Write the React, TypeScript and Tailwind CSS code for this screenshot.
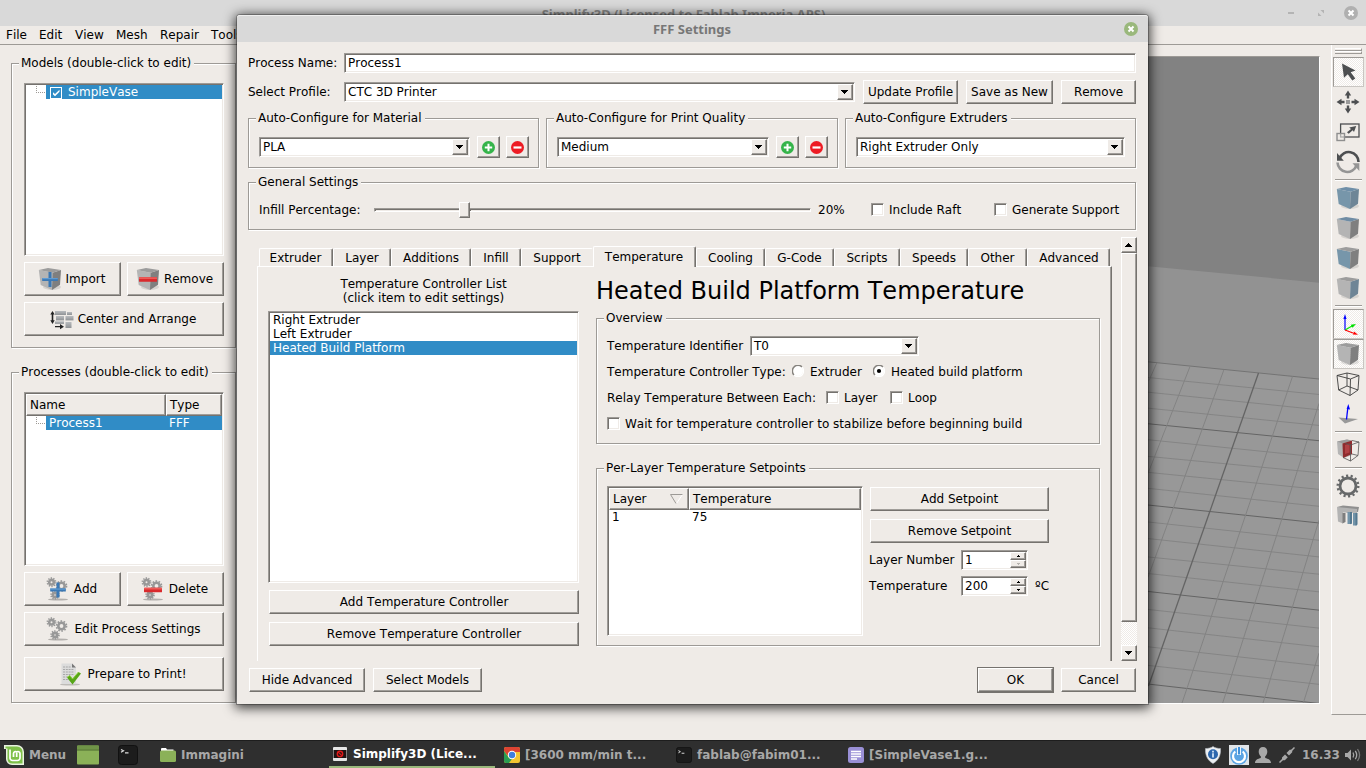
import type { ReactNode } from "react";

const SUNK =
  "border border-t-[#9d9a96] border-l-[#9d9a96] border-r-white border-b-white shadow-[inset_1px_1px_0_#75726e,inset_-1px_-1px_0_#efebe7] bg-white";
const RAISED =
  "border border-t-white border-l-white border-r-[#75726e] border-b-[#75726e] shadow-[inset_-1px_-1px_0_#a09d99] bg-[#efebe7]";

type Box = { className?: string; children?: ReactNode };

function Group({ title, className = "", children }: Box & { title: string }) {
  return (
    <section
      className={`relative shrink-0 border border-[#9d9a96] shadow-[1px_1px_0_#fff,inset_1px_1px_0_#fff] ${className}`}
    >
      <h2 className="absolute -top-2 left-[7px] bg-[#efebe7] px-[2px] pr-[3px]">{title}</h2>
      {children}
    </section>
  );
}

function Button({ className = "", children }: Box) {
  return (
    <button className={`flex shrink-0 items-center justify-center gap-1 ${RAISED} ${className}`}>
      {children}
    </button>
  );
}

function Triangle({ dir, small = false, dim = false }: { dir: "up" | "down"; small?: boolean; dim?: boolean }) {
  const fill = dim ? "#b5b2ae" : "#000";
  if (small) {
    return (
      <svg width="3" height="2" viewBox="0 0 3 2" shapeRendering="crispEdges">
        <path d={dir === "up" ? "M1 0h1v1h1v1H0V1h1z" : "M0 0h3v1H2v1H1V1H0z"} fill={fill} />
      </svg>
    );
  }
  return (
    <svg width="7" height="4" viewBox="0 0 7 4" shapeRendering="crispEdges" className="mr-px">
      <path
        d={dir === "up" ? "M3 0h1v1h1v1h1v1h1v1H0V3h1V2h1V1h1z" : "M0 0h7v1H6v1H5v1H4v1H3V3H2V2H1V1H0z"}
        fill={fill}
      />
    </svg>
  );
}

function Combo({ value, className = "" }: { value: string; className?: string }) {
  return (
    <div className={`flex h-5 shrink-0 items-center justify-between pr-px pl-[3px] ${SUNK} ${className}`}>
      <span>{value}</span>
      <span className={`flex h-4 w-4 items-center justify-center ${RAISED}`}>
        <Triangle dir="down" />
      </span>
    </div>
  );
}

function Spin({ value, atMin = false }: { value: string; atMin?: boolean }) {
  return (
    <div className={`flex h-5 w-[67px] shrink-0 items-center justify-between pr-px pl-[3px] ${SUNK}`}>
      <span>{value}</span>
      <span className="flex flex-col">
        <span className={`flex h-2 w-4 items-center justify-center ${RAISED}`}>
          <Triangle dir="up" small />
        </span>
        <span className={`flex h-2 w-4 items-center justify-center ${RAISED}`}>
          <Triangle dir="down" small dim={atMin} />
        </span>
      </span>
    </div>
  );
}

function Check({ label, className = "" }: { label: string; className?: string }) {
  return (
    <label className={`flex items-start gap-[5px] ${className}`}>
      <span className={`h-[13px] w-[13px] shrink-0 ${SUNK}`} />
      <span>{label}</span>
    </label>
  );
}

function Radio({ label, on = false, className = "" }: { label: string; on?: boolean; className?: string }) {
  return (
    <label className={`flex items-center gap-[6px] ${className}`}>
      <svg width="12" height="12" viewBox="0 0 12 12" className="relative -top-px shrink-0">
        <circle cx="6" cy="6" r="5" fill="#fff" />
        <path d="M2 10A5.500 5.500 0 0 1 10 2" fill="none" stroke="#85827e" strokeWidth="1.500" />
        <path d="M10 2A5.500 5.500 0 0 1 2 10" fill="none" stroke="#fff" strokeWidth="1.200" />
        {on && <circle cx="6" cy="6" r="2.100" fill="#000" />}
      </svg>
      <span>{label}</span>
    </label>
  );
}

/* ---------- icons ---------- */

const TOP = "0.8,3 10,1 23,3 14.5,5.8";
const LEFT = "0.8,3 14.5,5.8 14,23 2.7,18";
const RIGHT = "14.5,5.8 23,3 22,17.7 14,23";

function Cube({ top = "#9c9c9c", left = "#b4b4b4", right = "#7f7f7f", children }: { top?: string; left?: string; right?: string; children?: ReactNode }) {
  return (
    <svg width="24" height="24" viewBox="0 0 24 24" className="shrink-0">
      <ellipse cx="14" cy="20" rx="9" ry="3" fill="#000" opacity=".1" />
      <polygon points={LEFT} fill={left} />
      <polygon points={RIGHT} fill={right} />
      <polygon points={TOP} fill={top} />
      {children}
    </svg>
  );
}

const BluePlus = ({ x, y }: { x: number; y: number }) => (
  <g transform={`translate(${x} ${y})`}>
    <path d="M-1.500-7.500h3v6h6.300v3h-6.300v6h-3V1.500h-6.300v-3h6.300z" fill="#3b78b4" />
    <path d="M-7.800-1.500h15.600v1.200H-7.800z" fill="#5f9bd2" />
  </g>
);

const RedMinus = ({ x, y }: { x: number; y: number }) => (
  <g transform={`translate(${x} ${y})`}>
    <rect x="-9" y="-2.300" width="18" height="4.600" rx=".6" fill="#d92a2d" />
    <rect x="-9" y="-2.300" width="18" height="1.800" rx=".6" fill="#ee5a57" />
  </g>
);

function Cog({ x, y, r }: { x: number; y: number; r: number }) {
  const step = (2 * Math.PI * (r + 0.8)) / 20;
  return (
    <g>
      <circle cx={x} cy={y} r={r + 0.8} fill="none" stroke="#989898" strokeWidth="1.700" strokeDasharray={`${step} ${step}`} />
      <circle cx={x} cy={y} r={r - 1} fill="none" stroke="#989898" strokeWidth="2.600" />
    </g>
  );
}

function Gears({ children }: { children?: ReactNode }) {
  return (
    <svg width="24" height="24" viewBox="0 0 24 24" className="shrink-0">
      <ellipse cx="12" cy="22.500" rx="10" ry="1" fill="#000" opacity=".25" />
      <Cog x={5.5} y={5.2} r={3.3} />
      <Cog x={15.5} y={9} r={4.2} />
      <Cog x={9} y={18} r={3.1} />
      {children}
    </svg>
  );
}

const ArrangeIcon = () => (
  <svg width="24" height="24" viewBox="0 0 24 24" className="shrink-0">
    <defs>
      <linearGradient id="arr" x1="0" y1="0" x2="0" y2="1">
        <stop offset="0" stopColor="#b9bcbf" />
        <stop offset="1" stopColor="#8f9295" />
      </linearGradient>
    </defs>
    <g fill="url(#arr)">
      <rect x="5" y="4" width="11" height="4" />
      <rect x="17" y="5" width="5" height="3" />
      <rect x="6" y="9" width="8" height="4.400" />
      <rect x="15.500" y="9" width="8" height="4.400" />
      <rect x="5" y="14.300" width="9" height="2.600" />
      <rect x="15.500" y="15" width="6" height="6" />
    </g>
    <path d="M2.500 4l2.200 3.600H3.300v5.600h1.400L2.500 17 .3 13.200h1.400V7.600H.3z" fill="#222" />
    <path d="M5 19h5v-2l4 2.700-4 2.600v-2H5z" fill="#222" />
  </svg>
);

const PrepareIcon = () => (
  <svg width="24" height="24" viewBox="0 0 24 24" className="shrink-0">
    <ellipse cx="11" cy="22.500" rx="10" ry="1" fill="#000" opacity=".2" />
    <path d="M2.500 1.500H13l4 4V22H2.500z" fill="#dcdcdc" />
    <path d="M13 1.500l4 4h-4z" fill="#777" />
    <path d="M4 5h8M4 7.500h11M4 10h11M4 12.500h11M4 15h7M4 17.500h6" stroke="#a8a8a8" strokeDasharray="2 .8" />
    <path d="M8 15.500l2.800-2 2.700 3.500 6-7 2.500 1.500L13.500 22.500z" fill="#58a618" />
    <path d="M8 15.500l2.800-2 2.700 3.500 6-7" fill="none" stroke="#8ccf3f" />
  </svg>
);

const PlusDot = () => (
  <svg width="13" height="13" viewBox="0 0 13 13" className="mr-px">
    <circle cx="6.500" cy="6.500" r="6.500" fill="#35b44a" />
    <path d="M6.500 2.800v7.400M2.800 6.500h7.400" stroke="#fff" strokeWidth="2" />
  </svg>
);

const MinusDot = () => (
  <svg width="13" height="13" viewBox="0 0 13 13" className="mr-px">
    <circle cx="6.500" cy="6.500" r="6.500" fill="#ed1c24" />
    <path d="M2.500 6.500h8" stroke="#fff" strokeWidth="2.200" />
  </svg>
);

const PointerIcon = () => (
  <svg width="24" height="24" viewBox="0 0 24 24">
    <path d="M6 3.500l13.500 7-4.800 1.700 4.600 6.200-3 2.200-4.500-6.400-3.800 3.600z" fill="#4d4f51" />
  </svg>
);

const MoveIcon = () => (
  <svg width="24" height="24" viewBox="0 0 24 24">
    <rect x="10" y="10" width="4" height="4" fill="#9a9a9a" />
    <path d="M12 .5L15.200 5.500h-2v3h-2.400v-3h-2zM12 23.500L15.200 18.500h-2v-3h-2.400v3h-2zM.5 12L5.500 8.800v2h3v2.400h-3v2zM23.500 12L18.500 8.800v2h-3v2.400h3v2z" fill="#4d4f51" />
  </svg>
);

const ScaleIcon = () => (
  <svg width="24" height="24" viewBox="0 0 24 24">
    <rect x="4.600" y="4" width="18.400" height="13" fill="none" stroke="#4d4f51" strokeWidth="1.300" />
    <rect x="1" y="13.500" width="7.500" height="7" fill="#efebe7" fillOpacity=".6" stroke="#8f8f8f" strokeWidth="1.400" />
    <path d="M11 12.200l4-3.300-1.800-1.500 7-1.400-2.200 6-1.300-1.700-4 3.400z" fill="#4d4f51" />
  </svg>
);

const RotateIcon = () => (
  <svg width="24" height="24" viewBox="0 0 24 24">
    <path d="M3.500 8.500A9.800 9.800 0 0 1 22.500 12" fill="none" stroke="#4d4f51" strokeWidth="2.600" />
    <path d="M1 3v7.800h6.800z" fill="#4d4f51" />
    <path d="M20.500 15.500A9.800 9.800 0 0 1 1.500 12.500" fill="none" stroke="#959595" strokeWidth="2.600" />
    <path d="M23.300 21v-7.800h-6.800z" fill="#959595" />
  </svg>
);

const AxesIcon = () => (
  <svg width="24" height="24" viewBox="0 0 24 24">
    <path d="M9 18V5" stroke="#00f" strokeWidth="1.200" />
    <path d="M9 2l1.600 5H7.400z" fill="#00f" />
    <path d="M9 18l7-4" stroke="#0e0" strokeWidth="1.200" />
    <path d="M20 12l-5.300.8 1.800 2.900z" fill="#0d0" />
    <path d="M9 18l8 3" stroke="red" strokeWidth="1.200" />
    <path d="M22 22.800l-5.200-.2 1.200-3z" fill="red" />
  </svg>
);

const WireIcon = () => (
  <svg width="24" height="24" viewBox="0 0 24 24">
    <path d="M1 3.500L11 1l12 2.500L14.500 7zM1 3.500L2.700 18 14 23.500 14.500 7M14 23.500L22 18 23 3.500M11 1v13L2.700 18M11 14l11 4" fill="none" stroke="#3c3c3c" strokeWidth=".9" />
  </svg>
);

const NormalIcon = () => (
  <svg width="24" height="24" viewBox="0 0 24 24">
    <path d="M2.500 15.500l6.500 6 13-4.500z" fill="#999" />
    <path d="M10.500 17.500L11.800 6" stroke="#00f" strokeWidth="1.300" />
    <path d="M12.300 2l1.700 5.500-3.400-.4z" fill="#00f" />
  </svg>
);

const SectionIcon = () => (
  <svg width="24" height="24" viewBox="0 0 24 24">
    <path d="M1 3.500L11 1.500 16 3v14l-8 3-6-4z" fill="#b5b5b5" />
    <path d="M1 3.500L11 1.500l5 1-9 3z" fill="#9c9c9c" />
    <path d="M6.500 5.500L16 2.500v13.500l-9 4z" fill="#8f2b2e" />
    <path d="M9 7l4.500-1.500v9L9 16z" fill="#b04145" />
    <path d="M16 2.500L23 4l-8.500 3-5-1.500M14.500 7v16L22 17.500 23 4M7 19.500l7.500 3.500M16 16l6 1.500" fill="none" stroke="#555" strokeWidth=".8" />
  </svg>
);

const GearIcon = () => (
  <svg width="24" height="24" viewBox="0 0 24 24">
    <circle cx="12" cy="12" r="8" fill="none" stroke="#666869" strokeWidth="2.800" />
    <circle cx="12" cy="12" r="10.300" fill="none" stroke="#666869" strokeWidth="2.400" strokeDasharray="2.160 2.463" />
  </svg>
);

const SupportIcon = () => (
  <svg width="24" height="24" viewBox="0 0 24 24">
    <path d="M1 3l6-1.500L23 3l-1 5-11 .5z" fill="#8f8f8f" />
    <path d="M1 3l20 2v4l-14-.5v11L2 17.500z" fill="#b3b3b3" />
    <path d="M6.500 9h3v9l-3 1.500z" fill="#7e7e7e" />
    <path d="M11.500 8h4v12h-4zM17 9h4v12.500h-4z" fill="#7394a9" />
    <path d="M14 8h2v11.500l-2 .7zM19.500 9h2v11.500l-2 1z" fill="#54788f" />
  </svg>
);

/* ---------- main window ---------- */

function TreeBranch() {
  return (
    <svg width="20" height="14" viewBox="0 0 20 14" shapeRendering="crispEdges" className="shrink-0">
      <path d="M10.500 1v7M12 7.500h8" stroke="#9d9a96" strokeDasharray="1 1" fill="none" />
    </svg>
  );
}

function Sidebar() {
  return (
    <aside className="flex w-60 shrink-0 flex-col pt-[18px] pl-[11px]">
      <Group title="Models (double-click to edit)" className="h-[285px] w-[225px] pt-[19px] pl-3">
        <div className={`h-[173px] w-[200px] p-px ${SUNK}`}>
          <div className="flex h-[14px]">
            <TreeBranch />
            <div className="flex flex-1 items-center bg-[#308cc6] pl-1 text-white">
              <svg width="12" height="12" viewBox="0 0 12 12" className="mt-px">
                <rect x=".5" y=".5" width="11" height="11" fill="none" stroke="#fff" />
                <path d="M3 5.200v2.300L5 9.300l4.500-4.500V2.700L5 7z" fill="#fff" />
              </svg>
              <span className="pl-[6px]">SimpleVase</span>
            </div>
          </div>
        </div>
        <div className="mt-[6px] flex gap-[6px]">
          <Button className="h-[34px] w-[97px] pr-[2px]">
            <Cube><BluePlus x={12} y={12.5} /></Cube>
            Import
          </Button>
          <Button className="h-[34px] w-[97px] pr-[2px]">
            <Cube><RedMinus x={12} y={12.5} /></Cube>
            Remove
          </Button>
        </div>
        <Button className="mt-[6px] h-[34px] w-[200px] pr-[2px]">
          <ArrangeIcon />
          Center and Arrange
        </Button>
      </Group>

      <Group title="Processes (double-click to edit)" className="mt-6 h-[331px] w-[225px] pt-[19px] pl-3">
        <div className={`h-[174px] w-[200px] p-px ${SUNK}`}>
          <div className="flex h-[22px]">
            <span className={`flex w-[140px] items-center pl-[3px] ${RAISED}`}>Name</span>
            <span className={`flex flex-1 items-center pl-[3px] ${RAISED}`}>Type</span>
          </div>
          <div className="flex h-[14px]">
            <TreeBranch />
            <div className="flex flex-1 bg-[#308cc6] pl-[3px] text-white">
              <span className="w-[120px]">Process1</span>
              <span>FFF</span>
            </div>
          </div>
        </div>
        <div className="mt-[6px] flex gap-[6px]">
          <Button className="h-[34px] w-[97px] pr-[2px]">
            <Gears><BluePlus x={12} y={13} /></Gears>
            Add
          </Button>
          <Button className="h-[34px] w-[97px] pr-[2px]">
            <Gears><RedMinus x={12} y={13} /></Gears>
            Delete
          </Button>
        </div>
        <Button className="mt-[6px] h-[34px] w-[200px] pr-px">
          <Gears />
          Edit Process Settings
        </Button>
        <Button className="mt-[11px] h-[34px] w-[200px] pr-[2px]">
          <PrepareIcon />
          Prepare to Print!
        </Button>
      </Group>
    </aside>
  );
}

/* [y at left edge, y at right edge] of the bed's cross lines; every fifth one is heavy */
const ROWS: [number, number][] = [
  [377, 394], [391.7, 409.3], [407.7, 425], [423.3, 440.3], [439.3, 456.7], [456, 472.3],
  [472, 489], [488, 506], [504.7, 522.7], [521.7, 540], [538.3, 556.7], [556.7, 574],
  [573.3, 591.7], [591.3, 610], [609.3, 628], [627.7, 646.7], [646.7, 665.7], [665.3, 684.3], [684, 703.5],
];
const COLS: [number, number, number, number][] = [
  [1156.7, 362.5, 1149, 380], [1190, 366, 1148, 473], [1224, 369, 1148, 577],
  [1292.5, 376, 1182, 703], [1319, 403, 1222.7, 703], [1319, 520, 1263, 703], [1319, 653, 1303.3, 703],
];

function Viewport() {
  return (
    <svg viewBox="240 56 1079 647" width="1080" height="648" preserveAspectRatio="none" className="mt-[11px] shrink-0 border-t border-r border-b border-t-[#9d9a96] border-r-white border-b-white">
      <rect x="240" y="56" width="1079" height="647" fill="#828282" />
      <path d="M240 178L1148 265.500 1319 282V703H240z" fill="#929292" />
      <path d="M1148 361.300L1319 378.500V703H1148z" fill="#989898" />
      <path d="M1148 361.300L1319 378.500" stroke="#737373" />
      {ROWS.map(([a, b], i) => (
        <path key={i} d={`M1148 ${a}L1319 ${b}`} stroke={(i === 3 || i === 8 || i === 13 || i === 18) ? "#646464" : "#858585"} />
      ))}
      {COLS.map(([a, b, c, d], i) => (
        <path key={i} d={`M${a} ${b}L${c} ${d}`} stroke="#838383" />
      ))}
      <path d="M1258.500 372.500L1148.500 686" stroke="#646464" strokeWidth="1.300" />
    </svg>
  );
}

function Tool({ on = false, children }: { on?: boolean; children: ReactNode }) {
  return (
    <div
      className={
        on
          ? "flex h-[30px] w-[31px] items-center justify-center border border-t-[#9d9a96] border-l-[#9d9a96] border-r-[#c9c6c2] border-b-[#c9c6c2] bg-[conic-gradient(#fff_25%,#efebe7_0_50%,#fff_0_75%,#efebe7_0)] bg-size-[2px_2px] pr-px"
          : "flex h-[30px] w-[31px] items-center justify-center pr-[2px]"
      }
    >
      {children}
    </div>
  );
}

const ToolBreak = () => (
  <div className="flex h-[6px] items-center pl-[2px]">
    <div className="h-[2px] w-[27px] border-t border-b border-t-[#9d9a96] border-b-white" />
  </div>
);

function Toolbar() {
  const gray = "#b4b4b4";
  return (
    <nav className="flex h-[670px] w-[35px] shrink-0 flex-col border-b border-l border-b-[#9d9a96] border-l-white pl-px">
      <div className="mt-[3px] mb-[3px] ml-[2px] flex h-[6px] w-[27px] flex-col">
        <div className="h-[3px] border-t border-r border-b border-t-white border-r-[#9d9a96] border-b-[#9d9a96]" />
        <div className="h-[3px] border-t border-r border-b border-t-white border-r-[#9d9a96] border-b-[#9d9a96]" />
      </div>
      <Tool on><PointerIcon /></Tool>
      <Tool><MoveIcon /></Tool>
      <Tool><ScaleIcon /></Tool>
      <Tool><RotateIcon /></Tool>
      <ToolBreak />
      <Tool><Cube top="#6f8fa8" left="#7796aa" right="#6e8596" /></Tool>
      <Tool><Cube top="#6f8ca4" left={gray} /></Tool>
      <Tool><Cube left="#7796aa" /></Tool>
      <Tool><Cube left={gray} right="#6e8596" /></Tool>
      <ToolBreak />
      <Tool on><AxesIcon /></Tool>
      <Tool on><Cube left={gray} /></Tool>
      <Tool><WireIcon /></Tool>
      <Tool><NormalIcon /></Tool>
      <ToolBreak />
      <Tool><SectionIcon /></Tool>
      <ToolBreak />
      <Tool><GearIcon /></Tool>
      <Tool><SupportIcon /></Tool>
    </nav>
  );
}

const MENUS: [string, string][] = [
  ["File", "w-[33px]"], ["Edit", "w-[36px]"], ["View", "w-[41px]"], ["Mesh", "w-[44px]"],
  ["Repair", "w-[51px]"], ["Tools", "w-[46px]"], ["Help", "w-[40px]"],
];

function MainWindow() {
  return (
    <main className="flex h-[740px] flex-col">
      <header className="flex h-[26px] items-center bg-[#d9d9d9]">
        <h1 className="w-full pt-px pl-[85px] text-center font-['Noto_Sans'] text-[13px] leading-[18px] font-bold text-[#8b8b8b] [font-kerning:normal]">
          Simplify3D (Licensed to Fablab Imperia APS)
        </h1>
        <div className="flex w-[84px] shrink-0 items-center justify-between pr-2 pl-[6px]">
          <span className="h-[2px] w-[6px] bg-[#b4b4b4]" />
          <svg width="6" height="6" viewBox="0 0 6 6" className="ml-1">
            <path d="M2.500 0H6v3.500zM0 2.500L3.500 6H0z" fill="#b4b4b4" />
          </svg>
          <svg width="14" height="14" viewBox="0 0 14 14">
            <circle cx="7" cy="7" r="7" fill="#b0b0b0" />
            <path d="M4.500 4.500l5 5M9.500 4.500l-5 5" stroke="#fff" strokeWidth="2" />
          </svg>
        </div>
      </header>
      <nav className="flex h-[19px] items-center border-b border-[#9d9a96] pl-[6px]">
        {MENUS.map(([name, width]) => (
          <span key={name} className={width}>{name}</span>
        ))}
      </nav>
      <div className="flex flex-1">
        <Sidebar />
        <Viewport />
        <div className="w-[11px] shrink-0" />
        <Toolbar />
      </div>
    </main>
  );
}

/* ---------- settings dialog ---------- */

const TABS: [string, string][] = [
  ["Extruder", "w-[74px] pr-px"], ["Layer", "w-[58px]"], ["Additions", "w-[80px]"], ["Infill", "w-[50px]"],
  ["Support", "w-[72px]"], ["Temperature", "w-[103px] pr-px"], ["Cooling", "w-[69px]"], ["G-Code", "w-[69px]"],
  ["Scripts", "w-[66px]"], ["Speeds", "w-[68px]"], ["Other", "w-[59px]"], ["Advanced", "w-[83px] pl-px"],
];

function Tabs() {
  return (
    <div className="mt-[9px] flex h-5 shrink-0 items-end pl-[2px]">
      {TABS.map(([name, width]) => (
        <div
          key={name}
          className={`${width} flex shrink-0 justify-center rounded-t-[2px] ${RAISED} border-b-0 ${
            name === "Temperature"
              ? "relative -mb-px h-[21px] pt-[3px] shadow-[inset_-1px_0_0_#a09d99]"
              : name === "Support"
                ? "h-[18px] border-r-[#efebe7] pt-[2px] shadow-none"
                : "h-[18px] pt-[2px] shadow-[inset_-1px_0_0_#a09d99]"
          }`}
        >
          {name}
        </div>
      ))}
    </div>
  );
}

function Controllers() {
  return (
    <div className="flex w-[311px] shrink-0 flex-col">
      <p className="text-center">
        Temperature Controller List
        <br />
        (click item to edit settings)
      </p>
      <ul className={`mt-[6px] h-[272px] shrink-0 p-px ${SUNK}`}>
        <li className="h-[14px] pl-[3px]">Right Extruder</li>
        <li className="h-[14px] pl-[3px]">Left Extruder</li>
        <li className="h-[14px] bg-[#308cc6] pl-[3px] text-white">Heated Build Platform</li>
      </ul>
      <Button className="mt-[7px] ml-px h-6">Add Temperature Controller</Button>
      <Button className="mt-2 ml-px h-6">Remove Temperature Controller</Button>
    </div>
  );
}

function PlatformSettings() {
  return (
    <div className="flex w-[504px] shrink-0 flex-col">
      <h1 className="text-[24px] leading-7 whitespace-nowrap">Heated Build Platform Temperature</h1>
      <Group title="Overview" className="mt-[13px] flex h-[126px] flex-col gap-[6px] pt-[17px] pl-[10px]">
        <div className="flex h-5 items-center">
          <span className="w-[143px]">Temperature Identifier</span>
          <Combo value="T0" className="w-[169px]" />
        </div>
        <div className="flex h-5 items-center">
          <span className="w-[185px] whitespace-nowrap">Temperature Controller Type:</span>
          <Radio label="Extruder" className="w-[81px]" />
          <Radio label="Heated build platform" on />
        </div>
        <div className="flex h-5 items-center">
          <span className="w-[219px] whitespace-nowrap">Relay Temperature Between Each:</span>
          <Check label="Layer" className="w-[64px]" />
          <Check label="Loop" />
        </div>
        <div className="flex h-5 items-center">
          <Check label="Wait for temperature controller to stabilize before beginning build" />
        </div>
      </Group>
      <Group title="Per-Layer Temperature Setpoints" className="mt-6 flex h-[178px] pt-[17px] pl-[10px]">
        <div className={`h-[150px] w-[256px] shrink-0 p-px ${SUNK}`}>
          <div className="flex h-[22px]">
            <span className={`flex w-20 items-center justify-between pr-[5px] pl-[3px] ${RAISED}`}>
              Layer
              <svg width="13" height="10" viewBox="0 0 13 10">
                <path d="M12.500.5L6.500 9.500" stroke="#fff" />
                <path d="M12.500.5H.5l5.500 9" fill="none" stroke="#9d9a96" />
              </svg>
            </span>
            <span className={`flex flex-1 items-center pl-[3px] ${RAISED}`}>Temperature</span>
          </div>
          <div className="flex h-[14px] pl-[3px]">
            <span className="w-20">1</span>
            <span>75</span>
          </div>
        </div>
        <div className="flex flex-col pt-px pl-[6px]">
          <Button className="ml-px h-6 w-[179px]">Add Setpoint</Button>
          <Button className="mt-2 ml-px h-6 w-[179px]">Remove Setpoint</Button>
          <div className="mt-[7px] flex h-5 items-center">
            <span className="w-[92px]">Layer Number</span>
            <Spin value="1" atMin />
          </div>
          <div className="mt-[6px] flex h-5 items-center">
            <span className="w-[92px]">Temperature</span>
            <Spin value="200" />
            <span className="pl-[7px]">ºC</span>
          </div>
        </div>
      </Group>
    </div>
  );
}

function Scrollbar() {
  return (
    <div className="flex w-4 shrink-0 flex-col bg-[conic-gradient(#fff_25%,#efebe7_0_50%,#fff_0_75%,#efebe7_0)] bg-size-[2px_2px]">
      <span className={`flex h-4 items-center justify-center ${RAISED}`}><Triangle dir="up" /></span>
      <span className={`h-[369px] ${RAISED}`} />
      <span className={`mt-auto flex h-4 items-center justify-center ${RAISED}`}><Triangle dir="down" /></span>
    </div>
  );
}

function Dialog() {
  return (
    <div
      role="dialog"
      className="absolute top-[15px] left-[237px] flex h-[689px] w-[911px] flex-col rounded-t-[3px] bg-[#efebe7] shadow-[0_0_0_1px_rgba(0,0,0,.25),0_2px_12px_2px_rgba(0,0,0,.75)]"
    >
      <header className="flex h-[27px] shrink-0 items-center rounded-t-[3px] border-t border-[#efefef] bg-[#d9d9d9] pr-[10px] pl-[23px]">
        <h1 className="flex-1 text-center font-['Noto_Sans'] text-[13px] leading-[18px] font-bold text-[#777] [font-kerning:normal]">FFF Settings</h1>
        <svg width="14" height="14" viewBox="0 0 14 14" className="-mt-px">
          <circle cx="7" cy="7" r="7" fill="#9ab87c" />
          <path d="M4.500 4.500l5 5M9.500 4.500l-5 5" stroke="#fff" strokeWidth="2" />
        </svg>
      </header>
      <div className="flex flex-1 flex-col pt-[11px] pr-3 pl-[11px]">
        <div className="flex h-5 items-center">
          <span className="w-24">Process Name:</span>
          <div className={`flex h-5 flex-1 items-center pl-[3px] ${SUNK}`}>Process1</div>
        </div>
        <div className="mt-[7px] flex h-6 items-center">
          <span className="w-24">Select Profile:</span>
          <Combo value="CTC 3D Printer" className="w-[511px]" />
          <Button className="ml-2 h-6 w-[95px]">Update Profile</Button>
          <Button className="ml-2 h-6 w-[87px]">Save as New</Button>
          <Button className="ml-2 h-6 w-[75px]">Remove</Button>
        </div>
        <div className="mt-[14px] flex gap-[7px]">
          <Group title="Auto-Configure for Material" className="flex h-[50px] w-[291px] items-start pt-[17px] pl-[10px]">
            <Combo value="PLA" className="mt-px w-[211px]" />
            <Button className="ml-[7px] h-[22px] w-[23px]"><PlusDot /></Button>
            <Button className="ml-[6px] h-[22px] w-[23px]"><MinusDot /></Button>
          </Group>
          <Group title="Auto-Configure for Print Quality" className="flex h-[50px] w-[292px] items-start pt-[17px] pl-[10px]">
            <Combo value="Medium" className="mt-px w-[212px]" />
            <Button className="ml-[7px] h-[22px] w-[23px]"><PlusDot /></Button>
            <Button className="ml-[6px] h-[22px] w-[23px]"><MinusDot /></Button>
          </Group>
          <Group title="Auto-Configure Extruders" className="flex h-[50px] w-[291px] items-start pt-[17px] pl-[10px]">
            <Combo value="Right Extruder Only" className="mt-px w-[269px]" />
          </Group>
        </div>
        <Group title="General Settings" className="mt-[14px] flex h-12 items-start pt-[19px] pl-[10px]">
          <div className="flex h-4 items-center">
            <span className="w-[115px]">Infill Percentage:</span>
            <div className="flex h-4 w-[437px] items-center">
              <span className={`h-1 w-[85px] ${SUNK} border-r-0`} />
              <span className={`h-4 w-[11px] ${RAISED}`} />
              <span className={`h-1 flex-1 ${SUNK} border-l-0`} />
            </div>
            <span className="w-[60px] pl-[7px]">20%</span>
            <Check label="Include Raft" className="w-[123px]" />
            <Check label="Generate Support" />
          </div>
        </Group>
        <div className="mt-[7px] -mr-px flex h-[424px] shrink-0 justify-between pl-[9px]">
          <div className="flex w-[855px] flex-col">
            <Tabs />
            <div className="flex flex-1 gap-[17px] border-t border-r border-l border-t-white border-r-[#75726e] border-l-white pt-[10px] pl-[10px] shadow-[inset_-1px_0_0_#a09d99]">
              <Controllers />
              <PlatformSettings />
            </div>
          </div>
          <Scrollbar />
        </div>
        <div className="mt-[6px] flex h-[26px] items-center pl-px">
          <Button className="h-6 w-[116px]">Hide Advanced</Button>
          <Button className="ml-2 h-6 w-[109px]">Select Models</Button>
          <div className="ml-auto border border-[#75726e]">
            <Button className="h-6 w-[75px]">OK</Button>
          </div>
          <Button className="ml-[7px] h-6 w-[75px]">Cancel</Button>
        </div>
      </div>
    </div>
  );
}

/* ---------- taskbar ---------- */

const TermIcon = ({ size }: { size: number }) => (
  <svg width={size} height={size} viewBox="0 0 20 20" className="shrink-0">
    <rect x=".5" y=".5" width="19" height="19" rx="3" fill="#1c1c1c" stroke="#111" />
    <path d="M3 4.500l2.500 1.300L3 7.300M7 7.800h3.500" stroke="#ddd" strokeWidth="1.200" fill="none" />
  </svg>
);

function Taskbar() {
  return (
    <footer className="flex h-7 items-center border-t border-[#1d1d1d] bg-[#2f2f2f] text-[12px] font-bold text-[#a8a8a8] [font-kerning:normal]">
      <div className="flex w-[73px] items-center gap-[5px] pl-1">
        <svg width="20" height="20" viewBox="0 0 20 20" className="shrink-0">
          <path d="M0 0h13a7 7 0 0 1 7 7v13H8a6 6 0 0 1-6-6V4H0z" fill="#e9f3df" />
          <path d="M1.500 1.500H13a5.500 5.500 0 0 1 5.500 5.500v11.500H8.500A5 5 0 0 1 3.500 14V3.500h-2z" fill="#7fc04a" />
          <path d="M6 4.500V13a2.500 2.500 0 0 0 2.500 2.500h5A2.500 2.500 0 0 0 16 13V8.500a2 2 0 0 0-3.300-1.500A2 2 0 0 0 9.500 8.500V12M12.700 8v4" fill="none" stroke="#fff" strokeWidth="1.700" />
        </svg>
        <span>Menu</span>
      </div>
      <svg width="22" height="20" viewBox="0 0 22 20" className="ml-1 shrink-0">
        <rect width="22" height="19" y=".5" rx="1" fill="#8bb158" />
        <path d="M0 1.500Q0 .5 1 .5h20q1 0 1 1v3H0z" fill="#6f9447" />
        <path d="M0 5h22" stroke="#4c6a2e" />
      </svg>
      <div className="ml-[19px] flex w-[42px]"><TermIcon size={20} /></div>
      <div className="flex w-[169px] items-center gap-[5px]">
        <svg width="16" height="14" viewBox="0 0 16 14" className="shrink-0">
          <path d="M1 1Q1 0 2 0h4l1 1.500h6.500V4H1z" fill="#fff" />
          <rect y="2.500" width="16" height="11.500" rx="1.500" fill="#8bb158" />
        </svg>
        <span>Immagini</span>
      </div>
      <div className="flex h-[27px] w-[166px] items-center gap-[6px] border-b-2 border-[#9ab87c] pl-1 text-white">
        <svg width="14" height="14" viewBox="0 0 14 14" className="shrink-0">
          <rect width="14" height="14" rx="1" fill="#e4e4e4" />
          <rect x=".5" y="3" width="13" height="8" fill="#1e1212" />
          <circle cx="7" cy="6.900" r="2.700" fill="none" stroke="#e01818" strokeWidth="1.400" />
          <path d="M5.200 5.100l3.600 3.600" stroke="#e01818" strokeWidth="1.200" />
        </svg>
        <span className="whitespace-nowrap">Simplify3D (Lice...</span>
      </div>
      <div className="flex w-[181px] items-center gap-[5px] pl-[9px]">
        <svg width="16" height="16" viewBox="0 0 16 16" className="shrink-0">
          <rect width="16" height="16" rx="2" fill="#f3c431" />
          <path d="M0 2a2 2 0 0 1 2-2h12a2 2 0 0 1 2 2v3H8L4 9 0 4z" fill="#dd4433" />
          <path d="M0 4l5 7 3 1-3 4H2a2 2 0 0 1-2-2z" fill="#2a9c52" />
          <circle cx="8" cy="8" r="4.200" fill="#fff" />
          <circle cx="8" cy="8" r="3.200" fill="#3f7ede" />
        </svg>
        <span className="whitespace-nowrap">[3600 mm/min t...</span>
      </div>
      <div className="flex w-[172px] items-center gap-[5px]">
        <TermIcon size={16} />
        <span className="whitespace-nowrap">fablab@fabim01...</span>
      </div>
      <div className="flex w-[357px] items-center gap-[5px]">
        <svg width="16" height="16" viewBox="0 0 16 16" className="shrink-0">
          <rect width="16" height="16" rx="2.500" fill="#9a90d6" />
          <path d="M3 4.500h10M3 7h10M3 9.500h10M3 12h6" stroke="#fff" strokeWidth="1.300" />
        </svg>
        <span className="whitespace-nowrap">[SimpleVase1.g...</span>
      </div>
      <svg width="16" height="18" viewBox="0 0 16 18" className="shrink-0">
        <path d="M8 .5c2 1.600 5 2 7.500 2 .5 6.500-2 12-7.500 15C2.500 14.500 0 9 .5 2.500 3 2.500 6 2.100 8 .5z" fill="#eceff2" stroke="#b9bec4" strokeWidth=".6" />
        <circle cx="8" cy="8.300" r="5" fill="#2c66ad" />
        <path d="M8 4.800v1.600M8 7.300v4.200" stroke="#cfe2f7" strokeWidth="1.800" />
      </svg>
      <svg width="20" height="20" viewBox="0 0 20 20" className="ml-2 shrink-0">
        <rect width="20" height="20" fill="#e0e4e8" />
        <circle cx="10" cy="11" r="8.800" fill="#5aa3e3" />
        <path d="M6.300 6.500a6 6 0 1 0 7.400 0" fill="none" stroke="#fff" strokeWidth="2.200" />
        <path d="M10 2v8" stroke="#fff" strokeWidth="4" />
        <path d="M10 2v7.500" stroke="#3f8fd8" strokeWidth="2.200" />
      </svg>
      <svg width="16" height="16" viewBox="0 0 16 16" className="ml-[6px] shrink-0" fill="#a8a8a8">
        <path d="M8 0c2.700 0 4.300 1.800 4.300 4.500 0 2-.8 3.800-2.100 4.800v1.700c2.800.8 5.800 1.800 5.800 5H0c0-3.200 3-4.200 5.800-5V9.300C4.500 8.300 3.700 6.500 3.700 4.500 3.700 1.800 5.300 0 8 0z" />
      </svg>
      <svg width="16" height="16" viewBox="0 0 16 16" className="ml-2 shrink-0">
        <path d="M.5 15.500L5 11M11 5L15.500.5" stroke="#a8a8a8" strokeWidth="1.500" />
        <path d="M3 10.500l3-3 2.800 2.800-3 3H3zM7.500 6l3.200-3.200h2.500v2.500L10 8.500z" fill="#a8a8a8" />
      </svg>
      <span className="ml-[7px] w-[43px]">16.33</span>
      <svg width="16" height="14" viewBox="0 0 16 14" className="shrink-0" fill="none" stroke="#a8a8a8">
        <path d="M0 5h2.500L6 1.500v11L2.500 9H0z" fill="#a8a8a8" stroke="none" />
        <path d="M8 4.500q1.500 2.500 0 5" strokeWidth="1.300" />
        <path d="M10.300 2.800q2.800 4.200 0 8.400" strokeWidth="1.300" />
        <path d="M12.500 1q4.200 6 0 12" strokeWidth="1.300" stroke="#777" />
      </svg>
    </footer>
  );
}

export default function App() {
  return (
    <div className="relative h-[768px] w-[1366px] overflow-hidden bg-[#efebe7] font-['DejaVu_Sans',sans-serif] text-[12px] leading-[14px] text-black [font-kerning:none]">
      <MainWindow />
      <Taskbar />
      <Dialog />
    </div>
  );
}
